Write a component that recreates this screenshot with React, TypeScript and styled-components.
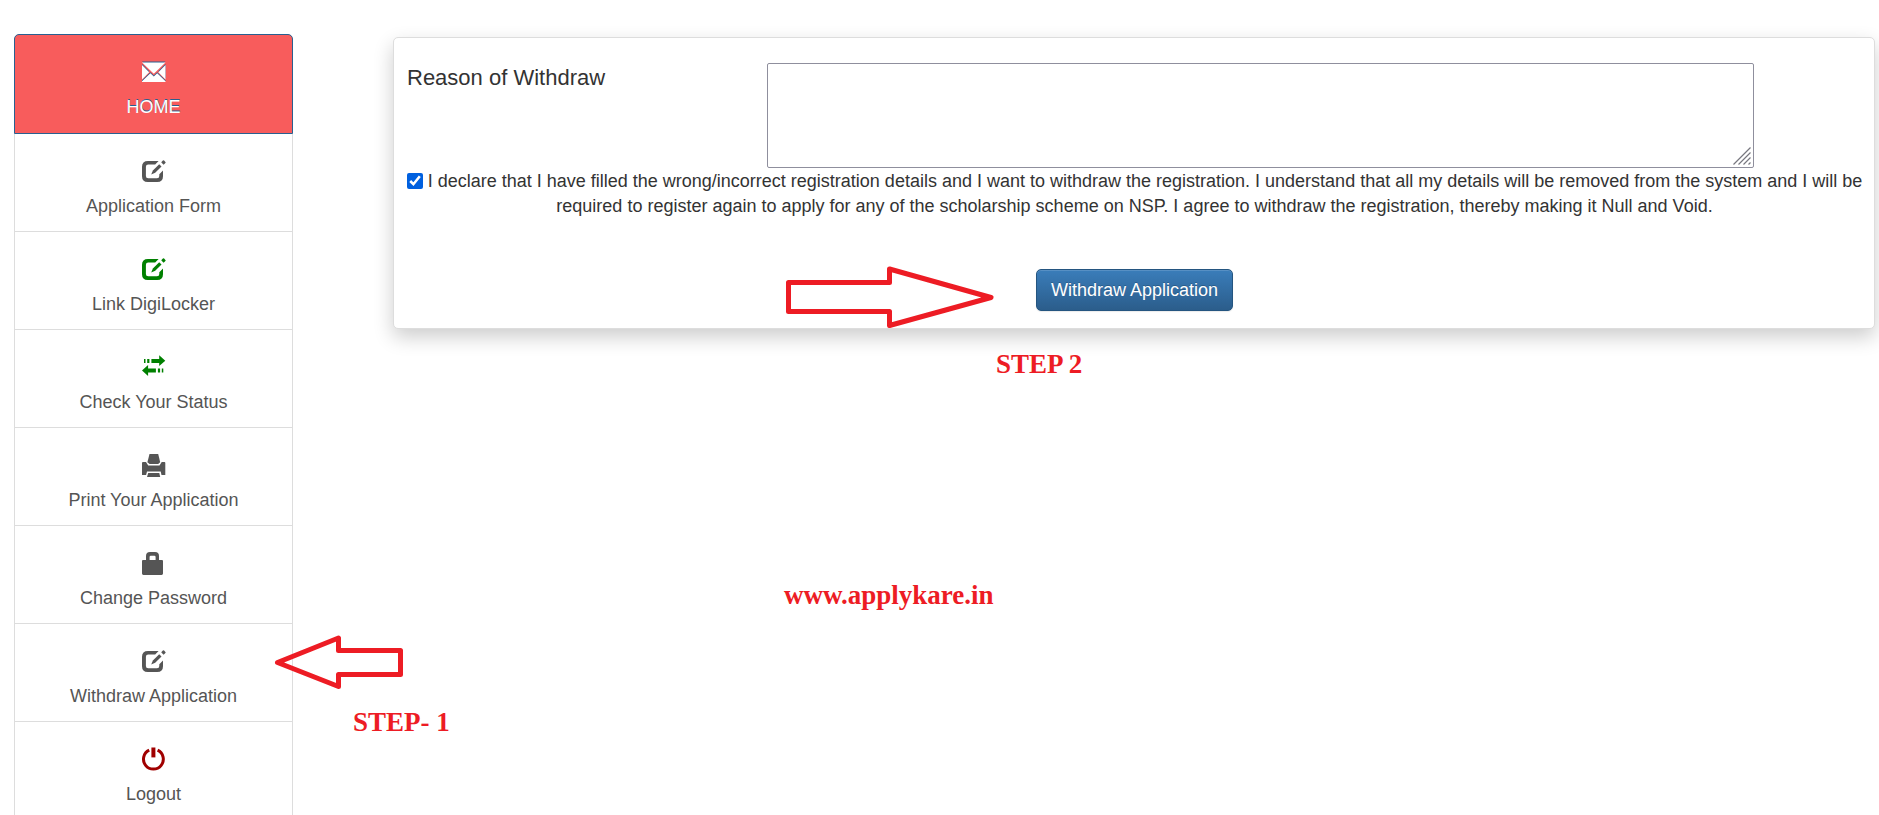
import React from "react";
import styled, { createGlobalStyle, css } from "styled-components";

const GlobalStyle = createGlobalStyle`
  *, *::before, *::after { box-sizing: border-box; }
  body {
    margin: 0;
    background: #fff;
    color: #333;
    font-family: "Liberation Sans", Arial, sans-serif;
    font-size: 18px;
    line-height: 25px;
  }
`;

const Page = styled.div`
  position: relative;
  display: grid;
  grid-template-columns: 279px minmax(0, 1fr);
  column-gap: 100px;
  align-items: start;
  height: 100vh;
  overflow: hidden;
  padding: 34px 4px 0 14px;
`;

const Menu = styled.nav`
  display: flex;
  flex-direction: column;
`;

const MenuLink = styled.a<{ $active?: boolean }>`
  display: flex;
  flex-direction: column;
  align-items: center;
  gap: 10px;
  padding: 26px 19px 12px;
  border: 1px solid #ddd;
  border-top: 0;
  color: #555;
  text-decoration: none;

  ${(p) =>
    p.$active &&
    css`
      padding-bottom: 13px;
      border: 1px solid #286090;
      border-radius: 5px 5px 0 0;
      background: #f85c5c;
      color: #fff;
      text-shadow: 0 -1px 0 #286090;

      svg {
        filter: drop-shadow(0 -1px 0 #286090);
      }
    `}
`;

const Glyph = styled.svg<{ $tint?: string }>`
  display: block;
  width: 24px;
  height: 24px;
  overflow: visible;
  color: ${(p) => p.$tint ?? "inherit"};
  fill: currentColor;
`;

const Panel = styled.form`
  margin-top: 3px;
  padding: 25px 12px 17px 13px;
  border: 1px solid #ddd;
  border-radius: 5px;
  background: #fff;
  box-shadow: 0 8px 20px rgba(0, 0, 0, 0.2);
`;

const ReasonRow = styled.div`
  display: grid;
  grid-template-columns: 360px minmax(0, 1fr);
  padding-right: 108px;
`;

const ReasonLabel = styled.label`
  font-size: 22px;
  line-height: 30px;
`;

const ReasonField = styled.div`
  position: relative;
  display: flex;
`;

const ReasonInput = styled.textarea`
  flex: 1;
  min-width: 0;
  height: 105px;
  padding: 3px;
  border: 1px solid #8f8f9d;
  border-radius: 2px;
  outline: 0;
  background: #fff;
  font: inherit;
  resize: none;
`;

const Grip = styled.svg`
  position: absolute;
  right: 3px;
  bottom: 3px;
  width: 18px;
  height: 18px;
  pointer-events: none;
`;

const Declaration = styled.label`
  display: block;
  margin: 0 -8px;
  padding-top: 1px;
  text-align: center;
`;

const Tick = styled.input`
  width: 16px;
  height: 16px;
  margin: 0 5px 0 0;
  vertical-align: -2px;
  accent-color: #0060df;
`;

const Actions = styled.div`
  display: flex;
  justify-content: center;
  padding-top: 50px;
`;

const Submit = styled.button`
  padding: 8px 14px 7px;
  border: 1px solid #245580;
  border-radius: 5px;
  background: linear-gradient(to bottom, #3a7dba 0%, #2b5d8b 100%);
  box-shadow: inset 0 1px 0 rgba(255, 255, 255, 0.15), 0 1px 1px rgba(0, 0, 0, 0.08);
  color: #fff;
  font: inherit;
  text-shadow: 0 -1px 0 rgba(0, 0, 0, 0.2);
`;

const Arrow = styled.svg<{ $x: number; $y: number }>`
  position: absolute;
  left: ${(p) => p.$x}px;
  top: ${(p) => p.$y}px;
  fill: none;
  stroke: #ed1c24;
  stroke-width: 5;
  stroke-linejoin: round;
  pointer-events: none;
`;

const Note = styled.strong<{ $x: number; $y: number }>`
  position: absolute;
  left: ${(p) => p.$x}px;
  top: ${(p) => p.$y}px;
  color: #ed1c24;
  font: bold 27px/30px "Liberation Serif", "Times New Roman", serif;
  white-space: nowrap;
`;

const EnvelopeGlyph = () => (
  <Glyph viewBox="0 0 24 24">
    <path d="M0 1.5H23.5L11.8 12.8Z" />
    <path d="M0 4V18.5L7.2 11.2Z" />
    <path d="M23.5 4V18.5L16.3 11.2Z" />
    <path d="M0 21H23.5V20.2L15.2 12.2L11.8 15.6L8.4 12.2L0 20.2Z" />
  </Glyph>
);

const EditGlyph = ({ tint }: { tint?: string }) => (
  <Glyph viewBox="0 0 24 24" $tint={tint}>
    <path d="M6 .9H16.6L13.2 4.4H6.2Q3.9 4.4 3.9 6.7V16Q3.9 18.3 6.2 18.3H15Q17.3 18.3 17.3 16V14.2L21 10.6V16.2Q21 22 15.2 22H5.8Q0 22 0 16.2V6.7Q0 .9 6 .9Z" />
    <path d="M9.2 14.4L10.9 10.5L17.2 4.3L19.5 6.6L13.2 12.8Z" />
    <path d="M19.2 2.3L20.9 .6Q21.5 0 22.1 .6L23.4 1.9Q24 2.5 23.4 3.1L21.6 4.7Z" />
  </Glyph>
);

const TransferGlyph = () => (
  <Glyph viewBox="0 0 24 24" $tint="#008000">
    <path d="M2 3H3.5V7H2ZM5.2 3H7.4V7H5.2ZM9.4 3H17.2V-.7L23.3 4.7L17.2 10V7H9.4Z" />
    <path d="M21.3 12.4H19.8V16.4H21.3ZM18.1 12.4H15.9V16.4H18.1ZM13.9 12.4H6.1V9L0 14.6L6.1 20V16.4H13.9Z" />
  </Glyph>
);

const PrintGlyph = () => (
  <Glyph viewBox="0 0 24 24">
    <path d="M7.5 0H16.2L18.2 8.2L16.2 10H7.6L5.4 8.2Z" />
    <path d="M1 8H4L6.2 11.4H17.5L19.7 8H22.5Q23.3 8 23.3 9V21H19.5L18.7 17.6H5L4.1 21H0V9Q0 8 1 8Z" />
    <path d="M6.2 19H17.3L18.2 23H5Z" />
  </Glyph>
);

const LockGlyph = () => (
  <Glyph viewBox="0 0 24 24">
    <path
      fillRule="evenodd"
      d="M4 8V4Q4 0 8 0H13Q17 0 17 4V8H20Q21 8 21 9V21.6Q21 23 19.6 23H1.4Q0 23 0 21.6V9Q0 8 1 8ZM7.6 8H13.6V5Q13.6 3.8 12.4 3.8H8.8Q7.6 3.8 7.6 5Z"
    />
  </Glyph>
);

const PowerGlyph = () => (
  <Glyph viewBox="0 0 24 24" $tint="#a00000">
    <path d="M9.4 -.5H13.4V9.4H9.4Z" />
    <path
      d="M7.2 2.2A9.9 9.9 0 1 0 15.6 2.2"
      fill="none"
      stroke="currentColor"
      strokeWidth="3"
    />
  </Glyph>
);

const items = [
  { label: "HOME", glyph: <EnvelopeGlyph />, active: true },
  { label: "Application Form", glyph: <EditGlyph /> },
  { label: "Link DigiLocker", glyph: <EditGlyph tint="#008000" /> },
  { label: "Check Your Status", glyph: <TransferGlyph /> },
  { label: "Print Your Application", glyph: <PrintGlyph /> },
  { label: "Change Password", glyph: <LockGlyph /> },
  { label: "Withdraw Application", glyph: <EditGlyph /> },
  { label: "Logout", glyph: <PowerGlyph /> },
];

export default function App() {
  return (
    <>
      <GlobalStyle />
      <Page>
        <Menu>
          {items.map((item) => (
            <MenuLink key={item.label} href="#" $active={item.active}>
              {item.glyph}
              <span>{item.label}</span>
            </MenuLink>
          ))}
        </Menu>

        <Panel onSubmit={(e) => e.preventDefault()}>
          <ReasonRow>
            <ReasonLabel htmlFor="reason">Reason of Withdraw</ReasonLabel>
            <ReasonField>
              <ReasonInput id="reason" />
              <Grip viewBox="0 0 18 18" stroke="#77777f" strokeWidth="1.2">
                <path d="M.5 17.5L17.5 .5M5.5 17.5L17.5 5.5M10.5 17.5L17.5 10.5M15.5 17.5L17.5 15.5" />
              </Grip>
            </ReasonField>
          </ReasonRow>
          <Declaration>
            <Tick type="checkbox" defaultChecked />
            I declare that I have filled the wrong/incorrect registration details and I want to
            withdraw the registration. I understand that all my details will be removed from the
            system and I will be required to register again to apply for any of the scholarship
            scheme on NSP. I agree to withdraw the registration, thereby making it Null and Void.
          </Declaration>
          <Actions>
            <Submit type="submit">Withdraw Application</Submit>
          </Actions>
        </Panel>

        <Arrow $x={785} $y={265} width="210" height="65">
          <path d="M3.5 17.5H104.5V4L206 32.5L104.5 60.5V46.5H3.5Z" />
        </Arrow>
        <Note $x={996} $y={349}>STEP 2</Note>
        <Note $x={784} $y={580}>www.applykare.in</Note>
        <Arrow $x={274} $y={634} width="132" height="58">
          <path d="M3.5 28.5L64.5 4V16.5H126.5V40.5H64.5V52.5Z" />
        </Arrow>
        <Note $x={353} $y={707}>STEP- 1</Note>
      </Page>
    </>
  );
}
